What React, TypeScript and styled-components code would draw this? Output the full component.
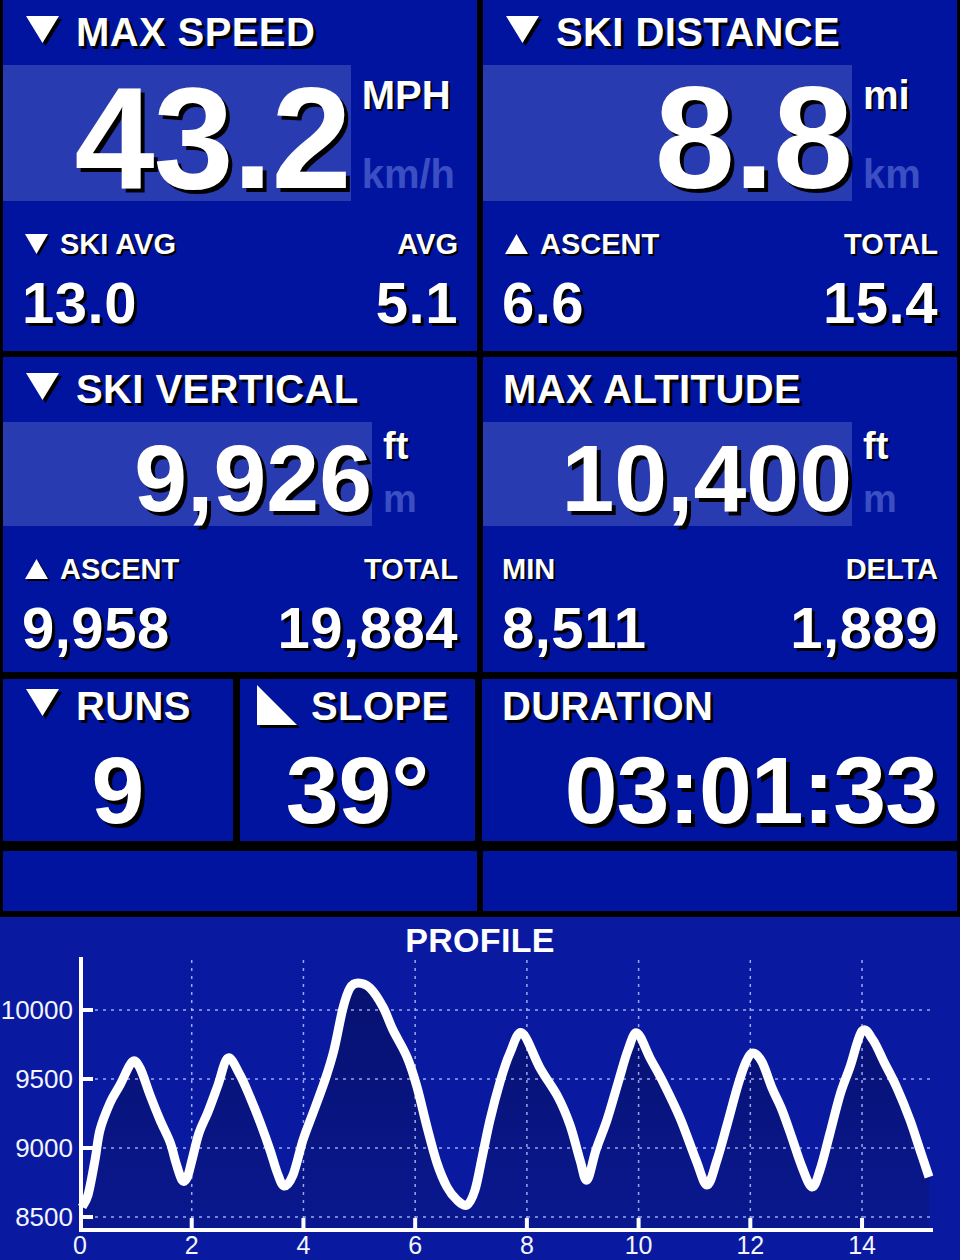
import React from "react";
import styled, { createGlobalStyle } from "styled-components";

const FONT = `"Liberation Sans", Arial, Helvetica, sans-serif`;
const BLUE = "#0114a0";
const HILITE = "#293bb0";
const DIM = "#3b4fc2";

const Global = createGlobalStyle`
  html, body { margin: 0; padding: 0; background: #000; }
  body { width: 960px; height: 1260px; overflow: hidden; font-family: ${FONT}; }
`;

const Screen = styled.main`
  width: 960px;
  height: 1260px;
  background: #000;
  display: flex;
  flex-direction: column;
`;

const Row = styled.div<{ $h: number; $mt: number; $cols: string; $gap: number }>`
  display: grid;
  grid-template-columns: ${(p) => p.$cols};
  column-gap: ${(p) => p.$gap}px;
  height: ${(p) => p.$h}px;
  margin-top: ${(p) => p.$mt}px;
  padding: 0 3px;
  flex: none;
`;

const Panel = styled.section`
  background: ${BLUE};
  color: #fff;
  display: flex;
  flex-direction: column;
  min-width: 0;
  font-family: ${FONT};
`;

const Title = styled.h2<{ $pt: number; $pl?: number; $gap?: number }>`
  margin: 0;
  padding: ${(p) => p.$pt}px 20px 0 ${(p) => p.$pl ?? 20}px;
  display: flex;
  align-items: flex-start;
  gap: ${(p) => p.$gap ?? 17}px;
  font: 700 40px/48px ${FONT};
  letter-spacing: 0.4px;
  text-shadow: 3px 3px 0 #000;
  white-space: nowrap;
`;

const IconSvg = styled.svg<{ $mt: number; $ml: number; $sh: number }>`
  flex: none;
  display: block;
  margin-top: ${(p) => p.$mt}px;
  margin-left: ${(p) => p.$ml}px;
  overflow: visible;
  filter: drop-shadow(${(p) => p.$sh}px ${(p) => p.$sh}px 0 #000);
`;

type Dir = "down" | "up" | "slope";

function Tri({ dir, w, h, mt, ml = 0, sh = 3 }: { dir: Dir; w: number; h: number; mt: number; ml?: number; sh?: number }) {
  const pts =
    dir === "down"
      ? `0,0 ${w},0 ${w / 2},${h}`
      : dir === "up"
      ? `${w / 2},0 ${w},${h} 0,${h}`
      : `0,0 ${w},${h} 0,${h}`;
  return (
    <IconSvg width={w} height={h} viewBox={`0 0 ${w} ${h}`} $mt={mt} $ml={ml} $sh={sh}>
      <polygon points={pts} fill="#fff" />
    </IconSvg>
  );
}

const Band = styled.div<{ $h: number }>`
  display: flex;
  height: ${(p) => p.$h}px;
  margin-top: 9px;
  flex: none;
`;

const BigBox = styled.div`
  flex: 1;
  min-width: 0;
  background: ${HILITE};
  display: flex;
  justify-content: flex-end;
  align-items: flex-start;
`;

const BigValue = styled.span<{ $size: number; $mt: number; $ls: number }>`
  font: 700 ${(p) => p.$size}px/1 ${FONT};
  letter-spacing: ${(p) => p.$ls}px;
  margin-top: ${(p) => p.$mt}px;
  text-shadow: 4px 4px 0 #000;
  white-space: nowrap;
`;

const Units = styled.div<{ $size: number; $pt: number; $pb: number }>`
  flex: none;
  min-width: 105px;
  box-sizing: border-box;
  padding: ${(p) => p.$pt}px 22px ${(p) => p.$pb}px 11px;
  display: flex;
  flex-direction: column;
  justify-content: space-between;
  font: 700 ${(p) => p.$size}px/1 ${FONT};
  white-space: nowrap;
`;

const UnitMain = styled.span`
  color: #fff;
  text-shadow: 2px 2px 0 #000;
`;

const UnitAlt = styled.span`
  color: ${DIM};
`;

const Stats = styled.div`
  display: grid;
  grid-template-columns: 1fr auto;
  padding: 0 19px;
  margin-top: 29px;
`;

const StatLabel = styled.div<{ $end?: boolean }>`
  display: flex;
  align-items: flex-start;
  gap: 12px;
  justify-self: ${(p) => (p.$end ? "end" : "start")};
  font: 700 29px/29px ${FONT};
  text-shadow: 2px 2px 0 #000;
  white-space: nowrap;
`;

const StatValue = styled.div<{ $end?: boolean }>`
  justify-self: ${(p) => (p.$end ? "end" : "start")};
  margin-top: 15px;
  font: 700 58px/58px ${FONT};
  letter-spacing: 0.5px;
  text-shadow: 3px 3px 0 #000;
  white-space: nowrap;
`;

const SoloValue = styled.div<{ $align: "center" | "right"; $ls?: number }>`
  margin-top: 13px;
  padding: 0 20px;
  text-align: ${(p) => p.$align};
  font: 700 95px/1 ${FONT};
  letter-spacing: ${(p) => p.$ls ?? 0}px;
  text-shadow: 4px 4px 0 #000;
  white-space: nowrap;
`;

const Profile = styled.section`
  flex: 1;
  margin-top: 6px;
  background: #0a1aa0;
  display: flex;
  flex-direction: column;
  color: #fff;
`;

const ProfileTitle = styled.h2`
  margin: 0;
  padding-top: 6px;
  text-align: center;
  font: 700 34px/34px ${FONT};
  letter-spacing: 0.3px;
`;

const ChartSvg = styled.svg`
  display: block;
  flex: none;
`;

type StatDef = { label: string; icon?: Dir; value: string };

type BigDef = {
  title: string;
  icon?: Dir;
  value: string;
  unit: string;
  alt: string;
  size: number;
  ls: number;
  bandH: number;
  valueMt: number;
  unitSize: number;
  unitPt: number;
  unitPb: number;
  left: StatDef;
  right: StatDef;
};

function BigPanel({ d }: { d: BigDef }) {
  return (
    <Panel>
      <Title $pt={8}>
        {d.icon && <Tri dir={d.icon} w={33} h={27} mt={8} ml={3} />}
        <span>{d.title}</span>
      </Title>
      <Band $h={d.bandH}>
        <BigBox>
          <BigValue $size={d.size} $mt={d.valueMt} $ls={d.ls}>
            {d.value}
          </BigValue>
        </BigBox>
        <Units $size={d.unitSize} $pt={d.unitPt} $pb={d.unitPb}>
          <UnitMain>{d.unit}</UnitMain>
          <UnitAlt>{d.alt}</UnitAlt>
        </Units>
      </Band>
      <Stats>
        <StatLabel>
          {d.left.icon && <Tri dir={d.left.icon} w={23} h={20} mt={4} ml={3} sh={2} />}
          <span>{d.left.label}</span>
        </StatLabel>
        <StatLabel $end>{d.right.label}</StatLabel>
        <StatValue>{d.left.value}</StatValue>
        <StatValue $end>{d.right.value}</StatValue>
      </Stats>
    </Panel>
  );
}

const bigPanels: BigDef[] = [
  {
    title: "MAX SPEED",
    icon: "down",
    value: "43.2",
    unit: "MPH",
    alt: "km/h",
    size: 144,
    ls: -1,
    bandH: 136,
    valueMt: 2,
    unitSize: 40,
    unitPt: 10,
    unitPb: 7,
    left: { label: "SKI AVG", icon: "down", value: "13.0" },
    right: { label: "AVG", value: "5.1" },
  },
  {
    title: "SKI DISTANCE",
    icon: "down",
    value: "8.8",
    unit: "mi",
    alt: "km",
    size: 144,
    ls: -1,
    bandH: 136,
    valueMt: 2,
    unitSize: 40,
    unitPt: 10,
    unitPb: 7,
    left: { label: "ASCENT", icon: "up", value: "6.6" },
    right: { label: "TOTAL", value: "15.4" },
  },
  {
    title: "SKI VERTICAL",
    icon: "down",
    value: "9,926",
    unit: "ft",
    alt: "m",
    size: 95,
    ls: 0,
    bandH: 104,
    valueMt: 9,
    unitSize: 38,
    unitPt: 5,
    unitPb: 8,
    left: { label: "ASCENT", icon: "up", value: "9,958" },
    right: { label: "TOTAL", value: "19,884" },
  },
  {
    title: "MAX ALTITUDE",
    value: "10,400",
    unit: "ft",
    alt: "m",
    size: 95,
    ls: 0,
    bandH: 104,
    valueMt: 9,
    unitSize: 38,
    unitPt: 5,
    unitPb: 8,
    left: { label: "MIN", value: "8,511" },
    right: { label: "DELTA", value: "1,889" },
  },
];

const profilePts: [number, number][] = [
  [82, 1207], [88, 1195], [95, 1160], [100, 1130], [110, 1103], [120, 1085], [132, 1062],
  [140, 1068], [150, 1095], [160, 1120], [170, 1142], [176, 1163], [182, 1180], [187, 1178],
  [192, 1160], [199, 1133], [208, 1112], [218, 1085], [228, 1058], [240, 1075], [250, 1097],
  [260, 1122], [270, 1150], [277, 1172], [284, 1186], [293, 1175], [303, 1140], [313, 1113],
  [325, 1080], [334, 1050], [343, 1008], [350, 988], [358, 983], [370, 988], [383, 1007],
  [393, 1030], [407, 1057], [417, 1087], [427, 1127], [437, 1163], [447, 1187], [457, 1200],
  [467, 1205], [475, 1190], [482, 1158], [490, 1120], [500, 1082], [510, 1053], [522, 1033],
  [540, 1068], [558, 1097], [570, 1125], [580, 1160], [587, 1180], [596, 1150], [607, 1120],
  [618, 1083], [628, 1050], [637, 1033], [650, 1058], [663, 1082], [680, 1118], [696, 1160],
  [707, 1185], [717, 1160], [727, 1125], [738, 1085], [746, 1062], [753, 1053], [762, 1062],
  [772, 1088], [782, 1110], [792, 1138], [802, 1167], [812, 1187], [820, 1170], [830, 1133],
  [840, 1095], [850, 1067], [862, 1031], [873, 1040], [884, 1062], [897, 1088], [910, 1120],
  [920, 1150], [929, 1177],
];

function smoothPath(pts: [number, number][]) {
  let d = `M${pts[0][0]},${pts[0][1]}`;
  for (let i = 0; i < pts.length - 1; i++) {
    const p0 = pts[i - 1] || pts[i];
    const p1 = pts[i];
    const p2 = pts[i + 1];
    const p3 = pts[i + 2] || p2;
    const t = 1 / 6;
    const c1x = p1[0] + (p2[0] - p0[0]) * t;
    const c1y = p1[1] + (p2[1] - p0[1]) * t;
    const c2x = p2[0] - (p3[0] - p1[0]) * t;
    const c2y = p2[1] - (p3[1] - p1[1]) * t;
    d += ` C${c1x.toFixed(1)},${c1y.toFixed(1)} ${c2x.toFixed(1)},${c2y.toFixed(1)} ${p2[0]},${p2[1]}`;
  }
  return d;
}

const X0 = 80;
const XU = 55.86;
const yTicks = [
  { v: "10000", y: 1010 },
  { v: "9500", y: 1079 },
  { v: "9000", y: 1148 },
  { v: "8500", y: 1217 },
];
const xTicks = [0, 2, 4, 6, 8, 10, 12, 14];

function ProfileChart() {
  const line = smoothPath(profilePts);
  const last = profilePts[profilePts.length - 1];
  const area = `${line} L${last[0]},1229 L${profilePts[0][0]},1229 Z`;
  return (
    <ChartSvg width={960} height={303} viewBox="0 957 960 303">
      <defs>
        <linearGradient id="fillGrad" gradientUnits="userSpaceOnUse" x1="0" y1="980" x2="0" y2="1229">
          <stop offset="0" stopColor="#06116e" />
          <stop offset="1" stopColor="#0a188f" />
        </linearGradient>
      </defs>
      <path d={area} fill="url(#fillGrad)" />
      <g stroke="#b4c2ff" strokeOpacity={0.85} strokeWidth={1.5} strokeDasharray="3 5">
        {yTicks.map((t) => (
          <line key={t.v} x1={95} y1={t.y} x2={932} y2={t.y} />
        ))}
        {xTicks.slice(1).map((v) => (
          <line key={v} x1={X0 + v * XU} y1={960} x2={X0 + v * XU} y2={1218} />
        ))}
      </g>
      <path d={line} fill="none" stroke="#fff" strokeWidth={9} strokeLinejoin="round" strokeLinecap="butt" />
      <g stroke="#fff" strokeWidth={4}>
        <line x1={81} y1={957} x2={81} y2={1232} />
        <line x1={79} y1={1230} x2={933} y2={1230} />
        {yTicks.map((t) => (
          <line key={t.v} x1={81} y1={t.y} x2={93} y2={t.y} />
        ))}
        {xTicks.slice(1).map((v) => (
          <line key={v} x1={X0 + v * XU} y1={1218} x2={X0 + v * XU} y2={1230} />
        ))}
      </g>
      <g fill="#f2f4ff" fontFamily={FONT} fontSize={26}>
        {yTicks.map((t) => (
          <text key={t.v} x={73} y={t.y + 9} textAnchor="end">
            {t.v}
          </text>
        ))}
      </g>
      <g fill="#f2f4ff" fontFamily={FONT} fontSize={25}>
        {xTicks.map((v) => (
          <text key={v} x={X0 + v * XU} y={1254} textAnchor="middle">
            {v}
          </text>
        ))}
      </g>
    </ChartSvg>
  );
}

export default function App() {
  return (
    <>
      <Global />
      <Screen>
        <Row $h={351} $mt={0} $cols="1fr 1fr" $gap={6}>
          <BigPanel d={bigPanels[0]} />
          <BigPanel d={bigPanels[1]} />
        </Row>
        <Row $h={315} $mt={6} $cols="1fr 1fr" $gap={6}>
          <BigPanel d={bigPanels[2]} />
          <BigPanel d={bigPanels[3]} />
        </Row>
        <Row $h={162} $mt={7} $cols="230px 235px 1fr" $gap={7}>
          <Panel>
            <Title $pt={3}>
              <Tri dir="down" w={33} h={27} mt={7} ml={3} />
              <span>RUNS</span>
            </Title>
            <SoloValue $align="center">9</SoloValue>
          </Panel>
          <Panel>
            <Title $pt={3} $pl={17} $gap={14}>
              <Tri dir="slope" w={40} h={40} mt={3} />
              <span>SLOPE</span>
            </Title>
            <SoloValue $align="center">39°</SoloValue>
          </Panel>
          <Panel>
            <Title $pt={3}>
              <span>DURATION</span>
            </Title>
            <SoloValue $align="right" $ls={-1}>
              03:01:33
            </SoloValue>
          </Panel>
        </Row>
        <Row $h={60} $mt={10} $cols="1fr 1fr" $gap={6}>
          <Panel />
          <Panel />
        </Row>
        <Profile>
          <ProfileTitle>PROFILE</ProfileTitle>
          <ProfileChart />
        </Profile>
      </Screen>
    </>
  );
}
